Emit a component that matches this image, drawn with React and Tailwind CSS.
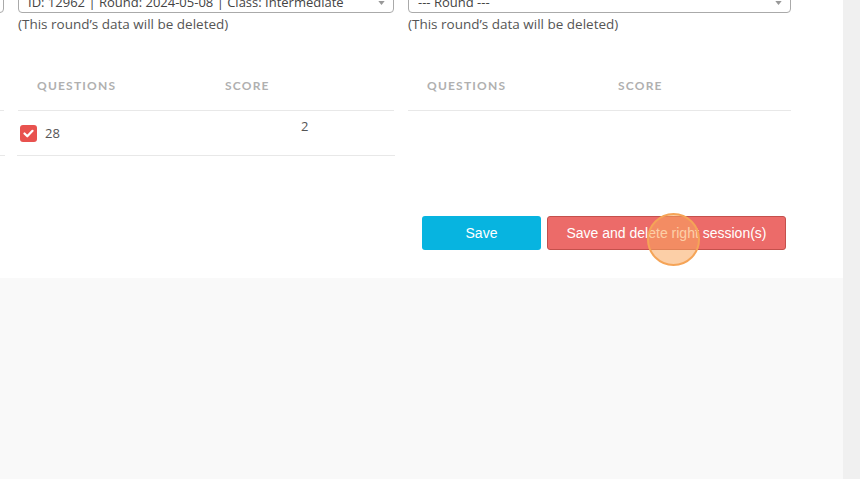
import React from 'react';

// Session merge panel: two round pickers with their question tables and actions
function RoundSelect({ label, width }) {
  return (
    <div
      className={`flex h-[32px] items-start justify-between rounded-[4px] border border-[#aaaaaa] bg-white pl-[9px] pr-[8px] pt-[11px] ${width}`}
    >
      <span className="text-[13px] leading-[18px] text-[#444]">{label}</span>
      <svg width="7" height="4" viewBox="0 0 8 5" className="mt-[8px]">
        <path d="M0 0h8L4 5z" fill="#999" />
      </svg>
    </div>
  );
}

function CheckBox() {
  return (
    <span className="flex h-[17px] w-[17px] items-center justify-center rounded-[3px] bg-[#e8524f]">
      <svg width="11" height="9" viewBox="0 0 11 9">
        <path d="M1.5 4.5l2.8 2.8L9.5 1.8" fill="none" stroke="#fff" strokeWidth="2.2" strokeLinecap="round" strokeLinejoin="round" />
      </svg>
    </span>
  );
}

function TableHead({ scoreOffset }) {
  return (
    <div className="flex h-[41px] items-center border-b border-[#e8e8e8] pb-[8px] pl-[19px] font-['Lato',sans-serif] text-[12px] font-bold tracking-[1.2px] text-[#b0b0b0]">
      <span className={scoreOffset}>QUESTIONS</span>
      <span>SCORE</span>
    </div>
  );
}

function Hint() {
  return <p className="mt-[2px] text-[13.5px] leading-[18px] text-[#555]">(This round’s data will be deleted)</p>;
}

function RoundColumn({ label, rows }) {
  return (
    <div className="w-[376px] shrink-0">
      <RoundSelect label={label} width="w-[376px]" />
      <Hint />
      <div className="mt-[37px]">
        <TableHead scoreOffset="w-[188px]" />
        {rows.map((r) => (
          <div key={r.q} className="-ml-px -mr-px flex h-[45px] border-b border-[#e8e8e8] pl-px text-[13px] text-[#555]">
            <div className="flex w-[283px] items-center gap-[8px] pl-[2px]">
              <CheckBox />
              <span className="mt-[1px]">{r.q}</span>
            </div>
            <span className="pt-[6px]">{r.score}</span>
          </div>
        ))}
      </div>
    </div>
  );
}

export default function App() {
  return (
    <div className="flex h-[479px] w-[860px] overflow-hidden bg-[#f9f9f9] font-['Open_Sans',sans-serif]">
      <div className="w-[843px]">
        <div className="relative h-[278px] overflow-hidden bg-white">
          <div className="-ml-[372px] -mt-[19px] flex gap-[14px]">
            <RoundColumn label="ID: 12961 | Round: 2024-05-01 | Class: Intermediate" rows={[{ q: 27, score: 3 }]} />
            <RoundColumn label="ID: 12962 | Round: 2024-05-08 | Class: Intermediate" rows={[{ q: 28, score: 2 }]} />
            <div className="w-[383px] shrink-0">
              <RoundSelect label="--- Round ---" width="w-[383px]" />
              <Hint />
              <div className="mt-[37px]">
                <TableHead scoreOffset="w-[191px]" />
              </div>
              <div className="mt-[105px] flex gap-[6px] pl-[14px] font-['Liberation_Sans',Arial,sans-serif] text-[14px] text-white">
                <button className="h-[34px] w-[119px] rounded-[3px] bg-[#07b4e0]">Save</button>
                <button className="h-[34px] w-[239px] rounded-[3px] border border-[#c4504c] bg-[#ec6b69]">
                  Save and delete right session(s)
                </button>
              </div>
            </div>
          </div>
          {/* click highlight */}
          <span className="pointer-events-none absolute left-[647px] top-[213px] h-[53px] w-[53px] rounded-full border-2 border-[#f5a457] bg-[#f9a85f]/55" />
        </div>
      </div>
      <div className="w-[17px] bg-[#f0f0f0]" />
    </div>
  );
}
